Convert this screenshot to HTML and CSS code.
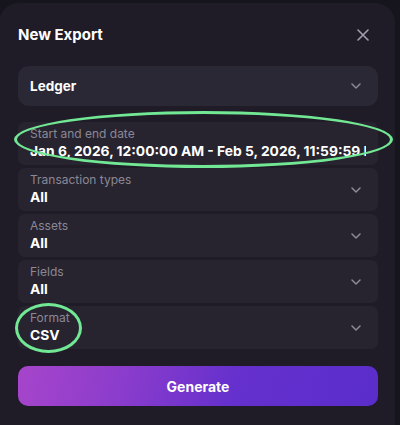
FILE: index.html
```html
<!DOCTYPE html>
<html>
<head>
<meta charset="utf-8">
<link rel="stylesheet" href="styles.css">
</head>
<body>
<div class="modal">
  <div class="header">
    <h1 class="title">New Export</h1>
    <svg class="close" width="12" height="12" viewBox="0 0 12 12"><path d="M1 1L11 11M11 1L1 11" stroke="#a19fad" stroke-width="1.6" stroke-linecap="round"/></svg>
  </div>
  <div class="select">
    <span class="select-value">Ledger</span>
    <svg class="chev" width="10" height="6" viewBox="0 0 10 6"><path d="M1 1L5 5L9 1" fill="none" stroke="#8d8a98" stroke-width="1.5" stroke-linecap="round" stroke-linejoin="round"/></svg>
  </div>
  <div class="fields">
    <div class="field">
      <div class="field-text">
        <div class="label">Start and end date</div>
        <div class="value">Jan 6, 2026, 12:00:00 AM - Feb 5, 2026, 11:59:59 PM</div>
      </div>
    </div>
    <div class="field">
      <div class="field-text">
        <div class="label">Transaction types</div>
        <div class="value">All</div>
      </div>
      <svg class="chev" width="10" height="6" viewBox="0 0 10 6"><path d="M1 1L5 5L9 1" fill="none" stroke="#8d8a98" stroke-width="1.5" stroke-linecap="round" stroke-linejoin="round"/></svg>
    </div>
    <div class="field">
      <div class="field-text">
        <div class="label">Assets</div>
        <div class="value">All</div>
      </div>
      <svg class="chev" width="10" height="6" viewBox="0 0 10 6"><path d="M1 1L5 5L9 1" fill="none" stroke="#8d8a98" stroke-width="1.5" stroke-linecap="round" stroke-linejoin="round"/></svg>
    </div>
    <div class="field">
      <div class="field-text">
        <div class="label">Fields</div>
        <div class="value">All</div>
      </div>
      <svg class="chev" width="10" height="6" viewBox="0 0 10 6"><path d="M1 1L5 5L9 1" fill="none" stroke="#8d8a98" stroke-width="1.5" stroke-linecap="round" stroke-linejoin="round"/></svg>
    </div>
    <div class="field">
      <div class="field-text">
        <div class="label">Format</div>
        <div class="value">CSV</div>
      </div>
      <svg class="chev" width="10" height="6" viewBox="0 0 10 6"><path d="M1 1L5 5L9 1" fill="none" stroke="#8d8a98" stroke-width="1.5" stroke-linecap="round" stroke-linejoin="round"/></svg>
    </div>
  </div>
  <button class="generate">Generate</button>
</div>
<div class="ring ring-date"></div>
<div class="ring ring-format"></div>
</body>
</html>
```

FILE: styles.css
```css
* { box-sizing: border-box; }
html, body {
  margin: 0;
  padding: 0;
  width: 400px;
  height: 425px;
  overflow: hidden;
  background: #16141c;
  font-family: Inter, "Noto Sans", sans-serif;
}
.modal {
  margin: 3px 0 0 -1px;
  width: 396px;
  height: 440px;
  background: #1f1c27;
  border-radius: 20px;
  padding: 22px 17px 0 19px;
}
.header {
  display: flex;
  align-items: center;
  justify-content: space-between;
  height: 20px;
  margin-bottom: 21px;
}
.title {
  margin: 0;
  font-size: 15px;
  line-height: 20px;
  font-weight: 700;
  color: #ffffff;
}
.close { margin-right: 9px; }
.select {
  height: 40px;
  background: #2a2834;
  border-radius: 11px;
  display: flex;
  align-items: center;
  justify-content: space-between;
  padding: 0 17px 0 12px;
}
.select-value {
  font-size: 13.5px;
  font-weight: 700;
  color: #ffffff;
}
.fields {
  margin-top: 16px;
  display: flex;
  flex-direction: column;
  gap: 3px;
}
.field {
  height: 43px;
  background: #27242f;
  border-radius: 7px;
  display: flex;
  align-items: center;
  padding: 0 17px 0 12px;
}
.field-text {
  flex: 1;
  min-width: 0;
  overflow: hidden;
}
.label {
  font-size: 12px;
  line-height: 15px;
  color: #8b8896;
  white-space: nowrap;
}
.value {
  font-size: 13.8px;
  line-height: 21px;
  font-weight: 700;
  color: #ffffff;
  white-space: nowrap;
  overflow: hidden;
}
.field:first-child .field-text { margin-right: -5px; }
.generate {
  display: block;
  width: 100%;
  height: 40px;
  margin-top: 17px;
  border: none;
  border-radius: 10px;
  background: linear-gradient(105deg, #a745cb 0%, #8a3ccc 30%, #6530cd 60%, #5a2dcb 100%);
  color: #ffffff;
  font-family: inherit;
  font-size: 14px;
  font-weight: 700;
}
.ring {
  position: absolute;
  border: 3.5px solid #72e895;
  border-radius: 50%;
}
.ring-date {
  left: 14px;
  top: 111px;
  width: 379px;
  height: 57px;
}
.ring-format {
  left: 15px;
  top: 303px;
  width: 67px;
  height: 50px;
}
```
